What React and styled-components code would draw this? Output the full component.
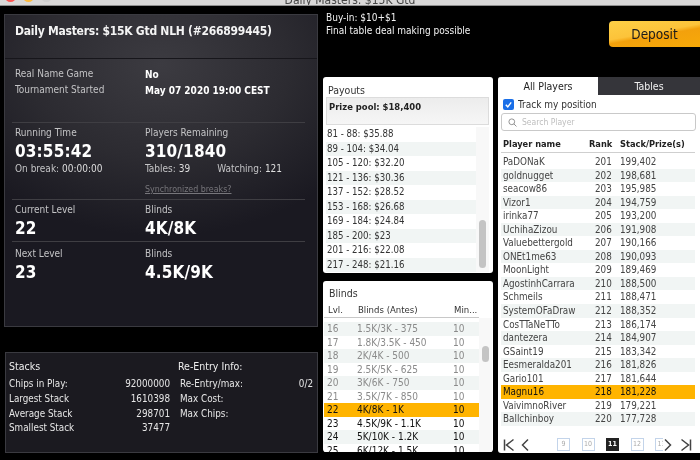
import React from 'react';
import styled, { createGlobalStyle } from 'styled-components';

const Global = createGlobalStyle`
  html, body { margin: 0; padding: 0; background: #000; }
  body { width: 700px; height: 460px; overflow: hidden; font-family: "DejaVu Sans", "Noto Sans", sans-serif; font-stretch: condensed; }
  * { box-sizing: border-box; }
`;

const Window = styled.div`
  width: 700px; height: 460px; background: #000; overflow: hidden; display: flex; flex-direction: column; filter: blur(.3px);
`;
const TitleBar = styled.div`
  height: 6px; flex: none; background: #d9d8d8; border-bottom: 1px solid #8f8f8f; position: relative; overflow: hidden;
  display: flex; justify-content: center; align-items: flex-end;
`;
const TitleText = styled.div`
  font-size: 12px; line-height: 12px; color: #444; white-space: nowrap; margin-bottom: -1px;
`;
const Lights = styled.div`
  position: absolute; left: 5px; top: -9px; display: flex; gap: 7px;
`;
const Light = styled.span`
  width: 11px; height: 11px; border-radius: 50%; background: ${p => p.$c};
`;
const Body = styled.div`
  flex: 1; display: grid; grid-template-columns: 318px 176px 1fr; min-height: 0;
`;
const LeftCol = styled.div`
  padding: 8px 0 0 4px; display: flex; flex-direction: column;
`;
const Panel = styled.section`
  width: 314px; border: 1px solid #3a3a40; background: ${p => p.$flat ? '#1b1a20' : 'radial-gradient(ellipse 75% 55% at 50% 16%, #3c3b41 0%, #2c2b31 55%, #1a1921 100%)'};
  color: #fff;
`;
const MainPanel = styled(Panel)`
  height: 313px;
`;
const TitleRow = styled.h1`
  margin: 0; height: 44px; padding: 8px 0 0 10px; font-size: 12px; letter-spacing: -.25px; line-height: 16px; font-weight: 700; color: #f4f4f4;
  border-bottom: 1px solid #17161b; white-space: nowrap;
`;
const InfoBlock = styled.div`
  height: 63px; margin: 0 12px 0 7px; padding: 7px 0 0 3px; display: grid; grid-template-columns: 130px 1fr; grid-auto-rows: 16px;
  align-items: center;
`;
const Label = styled.div`
  color: #c3c3c5; font-size: 10px; line-height: 14px; white-space: nowrap;
`;
const InfoValue = styled.div`
  color: #fff; font-weight: 700; font-size: 10px; white-space: nowrap;
`;
const Section = styled.div`
  margin: 0 12px 0 7px; padding: ${p => p.$pad}px 0 0 3px; border-top: 1px solid #3f3e43; display: grid; grid-template-columns: 130px 1fr;
  height: ${p => p.$h}px;
`;
const BigValue = styled.div`
  font-size: 17px; line-height: 22px; font-weight: 700; color: #fff; white-space: nowrap; letter-spacing: .15px;
`;
const SubRow = styled.div`
  font-size: 10px; line-height: 14px; color: #c3c3c5; display: flex; gap: 27px; white-space: nowrap;
`;
const SubVal = styled.span`
  color: #dedede;
`;
const SyncLink = styled.a`
  display: block; margin-top: 7px; font-size: 8.8px; line-height: 12px; color: #77767b; text-decoration: underline;
`;
const StatsPanel = styled(Panel)`
  margin-top: 25px; height: 101px; margin-left: 1px; width: 313px; padding: 3px 4px 0 3px; display: grid; grid-template-columns: 161px 1fr; column-gap: 8px;
`;
const StatsHead = styled.div`
  font-size: 10.5px; line-height: 16px; color: #eee; height: 21px; padding-top: 2px;
`;
const StatRow = styled.div`
  display: flex; justify-content: space-between; font-size: 9.8px; line-height: 14.8px; color: #e6e6e6; white-space: nowrap; padding-left: ${p => p.$indent ? 2 : 0}px;
`;
const MidCol = styled.div`
  padding: 3px 0 0 5px; display: flex; flex-direction: column;
`;
const BuyIn = styled.div`
  padding-left: 3px; height: 68px; color: #f2f2f2; font-size: 10px; line-height: 13px; padding-top: 2px;
`;
const Card = styled.section`
  background: #fff; border-radius: 3px; color: #222; overflow: hidden; width: 170px;
`;
const PayoutCard = styled(Card)`
  height: 196px; padding: 6px 4px 0;
`;
const CardTitle = styled.h2`
  margin: 0; font-weight: 400; font-size: 10.5px; line-height: 14px; color: #333; padding-left: 1px;
`;
const Prize = styled.div`
  height: 28px; background: linear-gradient(#ececec, #f6f6f6); border: 1px solid #dcdcdc; margin: 0 0 2px -1px; padding: 2px 2px; font-size: 9.4px; line-height: 13px; font-weight: 700; color: #222;
`;
const ListWrap = styled.div`
  display: grid; grid-template-columns: 150px 13px; margin-left: -1px;
`;
const PayRow = styled.div`
  height: 14.5px; line-height: 14.5px; font-size: 9.6px; padding-left: 1px; color: #333; background: ${p => p.$alt ? '#f1f5f4' : '#fff'}; white-space: nowrap;
`;
const Track = styled.div`
  background: #f8f8f8; position: relative;
`;
const Thumb = styled.div`
  position: absolute; left: 3px; width: 7px; border-radius: 4px; background: #c4c4c4; top: ${p => p.$top}px; height: ${p => p.$h}px;
`;
const BlindsCard = styled(Card)`
  margin-top: 8px; height: 171px; padding: 4px 0 0 1px;
`;
const BlindTitle = styled(CardTitle)`
  padding-left: 5px; line-height: 16px; height: 17px;
`;
const BlindHead = styled.div`
  display: grid; grid-template-columns: 30px 96px 30px; width: 155px; font-size: 9.5px; height: 16px; line-height: 14px; padding: 1px 0 0 4px; border-bottom: 1px solid #c8c8c8; color: #333; white-space: nowrap; overflow: hidden;
`;
const BlindBody = styled.div`
  display: grid; grid-template-columns: 155px 13px; height: 134px; overflow: hidden;
`;
const BlindRows = styled.div`
  padding-top: 4px;
`;
const BlindRow = styled.div`
  display: grid; grid-template-columns: 30px 96px 1fr; height: 13.55px; line-height: 13.55px; font-size: 10px; padding-left: 3px; white-space: nowrap;
  color: ${p => p.$past ? '#8a8a8a' : '#111'};
  background: ${p => p.$cur ? '#ffb400' : p.$alt ? '#f1f5f4' : '#fff'};
`;
const PlayersCol = styled.div`
  padding-top: 15px; display: flex; flex-direction: column; align-items: flex-end;
`;
const Deposit = styled.button`
  width: 91px; height: 26px; border: none; border-radius: 4px 0 0 4px; font-family: inherit; font-stretch: condensed; font-size: 13.5px; color: #1a1a1a;
  background: linear-gradient(170deg, #fdd046 0%, #fcc33a 45%, #f3a10c 55%, #f7a908 100%);
`;
const PlayersCard = styled(Card)`
  margin-top: 30px; width: 202px; height: 376px; border-radius: 3px 0 0 3px;
`;
const Tabs = styled.div`
  display: grid; grid-template-columns: 100px 1fr; height: 18px; background: #35353a; font-size: 10.5px;
`;
const Tab = styled.div`
  text-align: center; line-height: 19px; color: ${p => p.$on ? '#222' : '#f0f0f0'}; background: ${p => p.$on ? '#fff' : 'transparent'};
`;
const TrackRow = styled.label`
  display: flex; align-items: center; gap: 4px; height: 18px; padding-left: 5px; font-size: 10px; color: #333;
`;
const Check = styled.span`
  width: 11px; height: 11px; border-radius: 2px; background: #1a6fe8; display: flex; align-items: center; justify-content: center;
`;
const Search = styled.div`
  margin: 0 4px 0 3px; height: 18px; border: 1px solid #c9c9c9; border-radius: 3px; display: flex; align-items: center; gap: 5px; padding-left: 6px; font-size: 8.5px; color: #bdbdbd;
`;
const PHead = styled.div`
  display: grid; grid-template-columns: 86px 31px 1fr; margin: 6px 5px 0 3px; height: 16px; line-height: 14px; padding: 0 0 0 2px; border-bottom: 1px solid #cfcfcf; font-size: 9.2px; font-weight: 700; color: #222; white-space: nowrap;
`;
const PRows = styled.div`
  margin: 2px 5px 0 3px;
`;
const PRow = styled.div`
  display: grid; grid-template-columns: 92px 25px 1fr; height: 13.56px; line-height: 13.56px; font-size: 9.8px; padding-left: 2px; white-space: nowrap;
  color: ${p => p.$me ? '#111' : '#444'};
  background: ${p => p.$me ? '#ffb400' : p.$alt ? '#f1f5f4' : '#fff'};
`;
const Pager = styled.div`
  display: flex; align-items: center; margin-top: 9px; height: 20px; padding-left: 5px;
`;
const Arrow = styled.svg`
  width: ${p => p.$w}px; height: 14px; flex: none; margin-right: ${p => p.$mr || 0}px;
`;
const PageStrip = styled.div`
  display: flex; width: 106px; flex: none; overflow: hidden; margin-right: 1px;
`;
const PageBox = styled.div`
  width: 13px; height: 13px; flex: none; font-size: 7px; line-height: 11px; text-align: center; margin-right: 11.5px;
  border: 1px solid ${p => p.$on ? '#222' : '#c3d4ea'}; background: ${p => p.$on ? '#222' : '#fff'}; color: ${p => p.$on ? '#fff' : '#aaa'}; font-weight: ${p => p.$on ? 700 : 400};
`;

const payouts = ['81 - 88: $35.88','89 - 104: $34.04','105 - 120: $32.20','121 - 136: $30.36','137 - 152: $28.52','153 - 168: $26.68','169 - 184: $24.84','185 - 200: $23','201 - 216: $22.08','217 - 248: $21.16'];
const blinds = [['16','1.5K/3K - 375'],['17','1.8K/3.5K - 450'],['18','2K/4K - 500'],['19','2.5K/5K - 625'],['20','3K/6K - 750'],['21','3.5K/7K - 850'],['22','4K/8K - 1K'],['23','4.5K/9K - 1.1K'],['24','5K/10K - 1.2K'],['25','6K/12K - 1.5K']];
const players = [['PaDONaK','199,402'],['goldnugget','198,681'],['seacow86','195,985'],['Vizor1','194,759'],['irinka77','193,200'],['UchihaZizou','191,908'],['Valuebettergold','190,166'],['ONEt1me63','190,093'],['MoonLight','189,469'],['AgostinhCarrara','188,500'],['Schmeils','188,471'],['SystemOFaDraw','188,352'],['CosTTaNeTTo','186,174'],['dantezera','184,907'],['GSaint19','183,342'],['Eesmeralda201','181,826'],['Gario101','181,644'],['Magnu16','181,228'],['VaivimnoRiver','179,221'],['Ballchinboy','177,728']];

export default function App() {
  return (
    <Window>
      <Global />
      <TitleBar>
        <Lights><Light $c="#fc5753" /><Light $c="#fdbc40" /><Light $c="#cfcfcf" /></Lights>
        <TitleText>Daily Masters: $15K Gtd</TitleText>
      </TitleBar>
      <Body>
        <LeftCol>
          <MainPanel>
            <TitleRow>Daily Masters: $15K Gtd NLH (#266899445)</TitleRow>
            <InfoBlock>
              <Label>Real Name Game</Label><InfoValue>No</InfoValue>
              <Label>Tournament Started</Label><InfoValue>May 07 2020 19:00 CEST</InfoValue>
            </InfoBlock>
            <Section $h={77} $pad={3}>
              <div>
                <Label>Running Time</Label>
                <BigValue>03:55:42</BigValue>
                <Label>On break: <SubVal>00:00:00</SubVal></Label>
              </div>
              <div>
                <Label>Players Remaining</Label>
                <BigValue>310/1840</BigValue>
                <SubRow><span>Tables: <SubVal>39</SubVal></span><span>Watching: <SubVal>121</SubVal></span></SubRow>
                <SyncLink>Synchronized breaks?</SyncLink>
              </div>
            </Section>
            <Section $h={42} $pad={3}>
              <div><Label>Current Level</Label><BigValue>22</BigValue></div>
              <div><Label>Blinds</Label><BigValue>4K/8K</BigValue></div>
            </Section>
            <Section $h={60} $pad={5}>
              <div><Label>Next Level</Label><BigValue>23</BigValue></div>
              <div><Label>Blinds</Label><BigValue>4.5K/9K</BigValue></div>
            </Section>
          </MainPanel>
          <StatsPanel $flat>
            <div>
              <StatsHead>Stacks</StatsHead>
              <StatRow><span>Chips in Play:</span><span>92000000</span></StatRow>
              <StatRow><span>Largest Stack</span><span>1610398</span></StatRow>
              <StatRow><span>Average Stack</span><span>298701</span></StatRow>
              <StatRow><span>Smallest Stack</span><span>37477</span></StatRow>
            </div>
            <div>
              <StatsHead>Re-Entry Info:</StatsHead>
              <StatRow $indent><span>Re-Entry/max:</span><span>0/2</span></StatRow>
              <StatRow $indent><span>Max Cost:</span></StatRow>
              <StatRow $indent><span>Max Chips:</span></StatRow>
            </div>
          </StatsPanel>
        </LeftCol>
        <MidCol>
          <BuyIn>Buy-in: $10+$1<br />Final table deal making possible</BuyIn>
          <PayoutCard>
            <CardTitle>Payouts</CardTitle>
            <Prize>Prize pool: $18,400</Prize>
            <ListWrap>
              <div>{payouts.map((p, i) => <PayRow key={p} $alt={i % 2 === 1}>{p}</PayRow>)}</div>
              <Track><Thumb $top={93} $h={48} /></Track>
            </ListWrap>
          </PayoutCard>
          <BlindsCard>
            <BlindTitle>Blinds</BlindTitle>
            <BlindHead><span>Lvl.</span><span>Blinds (Antes)</span><span>Min...</span></BlindHead>
            <BlindBody>
              <BlindRows>
                {blinds.map(([l, b], i) => (
                  <BlindRow key={l} $alt={i % 2 === 0} $past={i < 6} $cur={i === 6}>
                    <span>{l}</span><span>{b}</span><span>10</span>
                  </BlindRow>
                ))}
              </BlindRows>
              <Track><Thumb $top={28} $h={16} /></Track>
            </BlindBody>
          </BlindsCard>
        </MidCol>
        <PlayersCol>
          <Deposit>Deposit</Deposit>
          <PlayersCard>
            <Tabs><Tab $on>All Players</Tab><Tab>Tables</Tab></Tabs>
            <TrackRow>
              <Check><svg width="9" height="9" viewBox="0 0 10 10"><path d="M2 5.2 4.2 7.6 8 2.6" fill="none" stroke="#fff" strokeWidth="1.6" /></svg></Check>
              Track my position
            </TrackRow>
            <Search>
              <svg width="9" height="9" viewBox="0 0 10 10"><circle cx="4.2" cy="4.2" r="3.2" fill="none" stroke="#888" /><path d="M6.6 6.6 9.4 9.4" stroke="#888" /></svg>
              Search Player
            </Search>
            <PHead><span>Player name</span><span>Rank</span><span>Stack/Prize(s)</span></PHead>
            <PRows>
              {players.map(([n, s], i) => (
                <PRow key={n} $alt={i % 2 === 1} $me={i === 17}>
                  <span>{n}</span><span>{201 + i}</span><span>{s}</span>
                </PRow>
              ))}
            </PRows>
            <Pager>
              <Arrow viewBox="0 0 12 14" $w={12} $mr={6}><path d="M1.5 1.5v11M10.5 1.5 3.5 7l7 5.5" fill="none" stroke="#444" strokeWidth="1.5" /></Arrow>
              <Arrow viewBox="0 0 8 14" $w={8} $mr={28}><path d="M7 1.5 1.5 7 7 12.5" fill="none" stroke="#444" strokeWidth="1.5" /></Arrow>
              <PageStrip>
                <PageBox>9</PageBox>
                <PageBox>10</PageBox>
                <PageBox $on>11</PageBox>
                <PageBox>12</PageBox>
                <PageBox>13</PageBox>
              </PageStrip>
              <Arrow viewBox="0 0 8 14" $w={8} $mr={8}><path d="M1 1.5 6.5 7 1 12.5" fill="none" stroke="#444" strokeWidth="1.5" /></Arrow>
              <Arrow viewBox="0 0 12 14" $w={12}><path d="M10.5 1.5v11M1.5 1.5 8.5 7l-7 5.5" fill="none" stroke="#444" strokeWidth="1.5" /></Arrow>
            </Pager>
          </PlayersCard>
        </PlayersCol>
      </Body>
    </Window>
  );
}
